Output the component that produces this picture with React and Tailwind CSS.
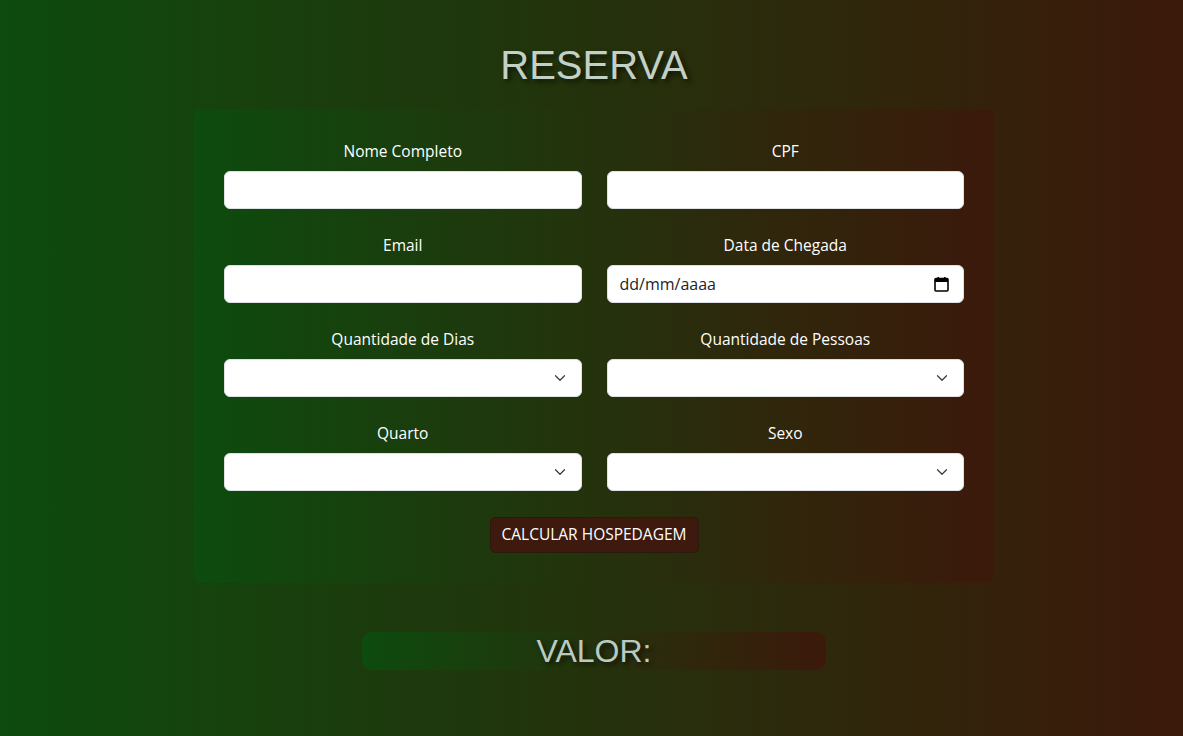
import { ChevronDown } from 'lucide-react';

const grad = 'bg-[linear-gradient(to_right,#0d4b0e,#3c190b)]';

function CalendarGlyph() {
  return (
    <svg className="absolute right-[14px] top-[11px]" width="15" height="15" viewBox="0 0 15 15">
      <rect x="1" y="1.5" width="13" height="12.5" rx="1" fill="none" stroke="#000" strokeWidth="1.6" />
      <rect x="1" y="1.5" width="13" height="3.5" fill="#000" />
      <rect x="3.5" y="0" width="1.6" height="2.5" fill="#000" />
      <rect x="9.9" y="0" width="1.6" height="2.5" fill="#000" />
    </svg>
  );
}

function Field({ label, type = 'text', select }) {
  return (
    <div className="flex flex-col items-center">
      <label className="text-white text-[15.5px] leading-[22px] mb-[9px]">{label}</label>
      {select ? (
        <div className="relative w-full h-[38px] bg-white rounded-[6px] border border-[#dee2e6]">
          <ChevronDown className="absolute right-[12px] top-[9px] w-[18px] h-[18px] text-[#343a40]" strokeWidth={1.6} />
        </div>
      ) : type === 'date' ? (
        <div className="relative w-full h-[38px] bg-white rounded-[6px] border border-[#dee2e6] flex items-center px-3 text-[16px] text-[#212529]">
          dd/mm/aaaa
          <CalendarGlyph />
        </div>
      ) : (
        <div className="w-full h-[38px] bg-white rounded-[6px] border border-[#dee2e6]" />
      )}
    </div>
  );
}

export default function App() {
  return (
    <div className={`min-h-[736px] w-full ${grad} flex flex-col items-center pt-[41px] pl-[5px]`} style={{ fontFamily: '"Open Sans", "Noto Sans", sans-serif' }}>
      <h1 className="text-[#c2d0c6] text-[40px] leading-[48px] mb-[20px] [text-shadow:3px_3px_5px_rgba(0,0,0,0.6)]" style={{ fontFamily: '"Liberation Sans", Arial, sans-serif' }}>
        RESERVA
      </h1>
      <div className={`w-[800px] ${grad} rounded-[8px] px-[30px] pt-[31px] pb-[30px]`}>
        <div className="grid grid-cols-2 gap-x-[25px] gap-y-[25px]">
          <Field label="Nome Completo" />
          <Field label="CPF" />
          <Field label="Email" />
          <Field label="Data de Chegada" type="date" />
          <Field label="Quantidade de Dias" select />
          <Field label="Quantidade de Pessoas" select />
          <Field label="Quarto" select />
          <Field label="Sexo" select />
        </div>
        <div className="flex justify-center mt-[26px]">
          <button className="bg-[#3d1a0d] text-white text-[15.5px] h-[36px] px-[11px] rounded-[5px] border border-[#2a1a0e]">
            CALCULAR HOSPEDAGEM
          </button>
        </div>
      </div>
      <div className={`mt-[49px] w-[464px] h-[38px] ${grad} rounded-[10px] flex items-center justify-center`}>
        <span className="text-[#b9cac2] text-[32px] leading-[38px] [text-shadow:3px_3px_5px_rgba(0,0,0,0.6)]" style={{ fontFamily: '"Liberation Sans", Arial, sans-serif' }}>
          VALOR:
        </span>
      </div>
    </div>
  );
}
